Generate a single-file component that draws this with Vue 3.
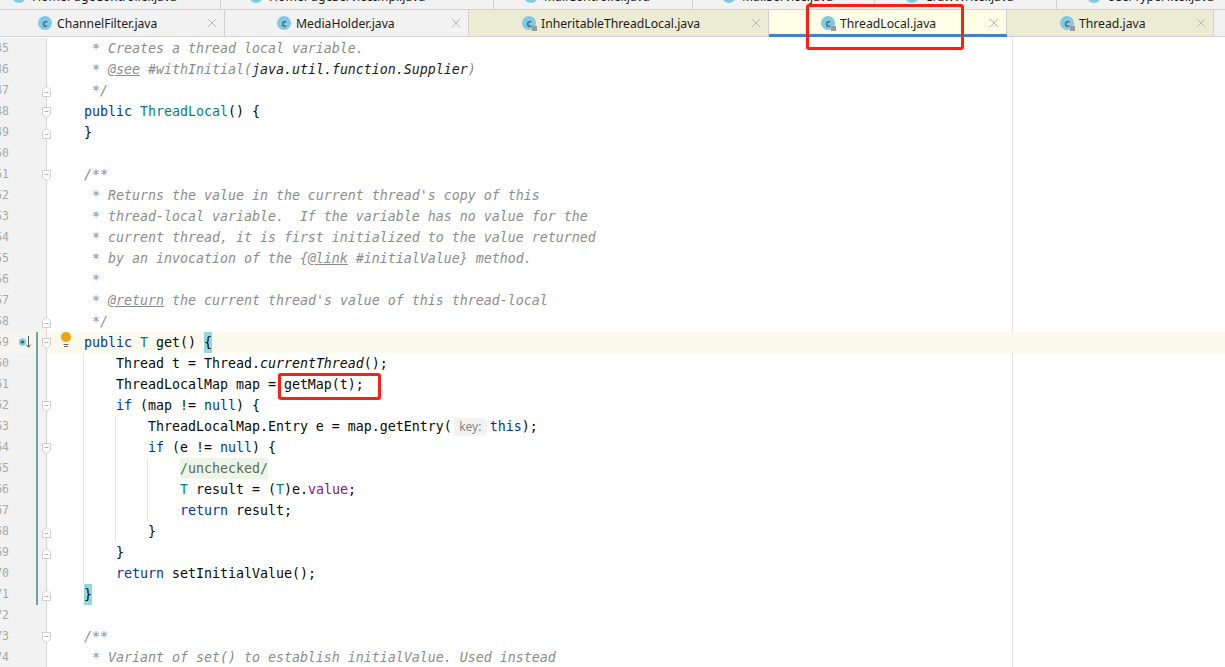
<script setup>
const topTabs = [
  { name: 'HomePageController.java', pad: 12 },
  { name: 'HomePageServiceImpl.java', pad: 28 },
  { name: 'MallController.java', pad: 30 },
  { name: 'MallService.java', pad: 29 },
  { name: 'CrawWriter.java', pad: 30 },
  { name: 'UserTypeFilter.java', pad: 30 }
]
const tabs = [
  { name: 'ChannelFilter.java', pad: 38, kind: '' },
  { name: 'MediaHolder.java', pad: 52, kind: '' },
  { name: 'InheritableThreadLocal.java', pad: 53, kind: 'ro' },
  { name: 'ThreadLocal.java', pad: 52, kind: 'ro active' },
  { name: 'Thread.java', pad: 53, kind: 'ro' }
]
const k = 'kw', c = 'cm', t = 'ty', d = 'dt', b = 'bk', i = 'it', m = 'mt', f = 'fd', u = 'un'
const rows = [
  [45, '', [[c, '     * Creates a thread local variable.']]],
  [46, '', [[c, '     * '], [d, '@see'], [c, ' #withInitial('], [b, 'java.util.function.Supplier'], [c, ')']]],
  [47, 'up', [[c, '     */']]],
  [48, 'down', [['', '    '], [k, 'public '], [t, 'ThreadLocal'], ['', '() {']]],
  [49, 'up', [['', '    }']]],
  [50, '', []],
  [51, 'down', [[c, '    /**']]],
  [52, '', [[c, "     * Returns the value in the current thread's copy of this"]]],
  [53, '', [[c, '     * thread-local variable.  If the variable has no value for the']]],
  [54, '', [[c, '     * current thread, it is first initialized to the value returned']]],
  [55, '', [[c, '     * by an invocation of the {'], [d, '@link'], [c, ' #initialValue} method.']]],
  [56, '', [[c, '     *']]],
  [57, '', [[c, '     * '], [d, '@return'], [c, " the current thread's value of this thread-local"]]],
  [58, 'up', [[c, '     */']]],
  [59, 'down', [['', '    '], [k, 'public '], [t, 'T '], ['', 'get() '], [m, '{']]],
  [60, '', [['', '        Thread t = Thread.'], [i, 'currentThread'], ['', '();']]],
  [61, '', [['', '        ThreadLocalMap map = getMap(t);']]],
  [62, 'down', [['', '        '], [k, 'if '], ['', '(map != '], [k, 'null'], ['', ') {']]],
  [63, '', [['', '            ThreadLocalMap.Entry e = map.getEntry('], ['hint', 'key:'], [k, 'this'], ['', ');']]],
  [64, 'down', [['', '            '], [k, 'if '], ['', '(e != '], [k, 'null'], ['', ') {']]],
  [65, '', [['', '                '], [u, '/unchecked/']]],
  [66, '', [['', '                '], [t, 'T '], ['', 'result = ('], [t, 'T'], ['', ')e.'], [f, 'value'], ['', ';']]],
  [67, '', [['', '                '], [k, 'return '], ['', 'result;']]],
  [68, 'up', [['', '            }']]],
  [69, 'up', [['', '        }']]],
  [70, '', [['', '        '], [k, 'return '], ['', 'setInitialValue();']]],
  [71, 'up', [['', '    '], [m, '}']]],
  [72, '', []],
  [73, 'down', [[c, '    /**']]],
  [74, '', [[c, '     * Variant of set() to establish initialValue. Used instead']]]
]
const guides = (n) => {
  const g = []
  if (n >= 60 && n <= 70) g.push(83)
  if (n >= 63 && n <= 68) g.push(115)
  if (n >= 65 && n <= 67) g.push(147)
  return g
}
</script>

<template>
  <div class="app">
    <div class="tabs top">
      <div v-for="tab in topTabs" :key="tab.name" class="tab" :style="{ paddingLeft: tab.pad + 'px' }">
        <span class="icon"></span>
        <span class="name">{{ tab.name }}</span>
      </div>
    </div>
    <div class="tabs main">
      <div v-for="tab in tabs" :key="tab.name" class="tab" :class="tab.kind" :style="{ paddingLeft: tab.pad + 'px' }">
        <span class="icon"><span class="letter">c</span><span class="lock"></span></span>
        <span class="name">{{ tab.name }}</span>
        <svg class="close" width="10" height="10" viewBox="0 0 10 10"><path d="M1 1 9 9M9 1 1 9" /></svg>
      </div>
      <div class="tab rest"></div>
    </div>
    <div class="editor">
      <div class="margin-line"></div>
      <div v-for="row in rows" :key="row[0]" class="row" :class="{ current: row[0] === 59 }">
        <div class="gutter">
          <span class="num">{{ row[0] }}</span>
          <svg v-if="row[0] === 59" class="impl" width="16" height="14" viewBox="0 0 16 14">
            <circle cx="5.5" cy="6" r="3.7" fill="#7ccbe0" />
            <circle cx="5.5" cy="6" r="1.6" fill="#3d5a68" />
            <path d="M11.5 0v11M9.3 8.7 11.5 11.2 13.7 8.7" fill="none" stroke="#555" stroke-width="1" />
          </svg>
          <span v-if="row[0] >= 59 && row[0] <= 71" class="changed"></span>
        </div>
        <svg v-if="row[1] === 'down'" class="fold" width="9" height="11" viewBox="0 0 9 11">
          <path d="M.5.5h8v7l-4 3-4-3z" fill="#fff" stroke="#cfcfcf" />
          <path d="M2.5 4.5h4" stroke="#b4b4b4" />
        </svg>
        <svg v-if="row[1] === 'up'" class="fold" width="9" height="11" viewBox="0 0 9 11">
          <path d="M.5 10.5h8v-7l-4-3-4 3z" fill="#fff" stroke="#cfcfcf" />
          <path d="M2.5 6.5h4" stroke="#b4b4b4" />
        </svg>
        <svg v-if="row[0] === 59" class="bulb" width="12" height="16" viewBox="0 0 12 16">
          <circle cx="6" cy="5" r="5" fill="#f0a30a" />
          <path d="M3.5 12.5h5M4 14.5h4" stroke="#666" stroke-width="1" />
        </svg>
        <span v-for="g in guides(row[0])" :key="g" class="guide" :style="{ left: g + 'px' }"></span>
        <code class="code"><span v-for="(tok, n) in row[2]" :key="n" :class="tok[0]">{{ tok[1] }}</span></code>
      </div>
      <div class="mark tab-mark"></div>
      <div class="mark call-mark"></div>
    </div>
  </div>
</template>

<style scoped>
.app {
  position: relative;
  width: 1225px;
  height: 667px;
  overflow: hidden;
  background: #fff;
  display: flex;
  flex-direction: column;
}
.tabs {
  display: grid;
  flex: none;
  background: #f2f2f2;
  border-bottom: 1px solid #d1d1d1;
  box-sizing: border-box;
  font-family: "Noto Sans", sans-serif;
  font-size: 12.2px;
  color: #1c1c1c;
}
.top {
  height: 10px;
  grid-template-columns: 221px 273px 199px 182px 182px 1fr;
  overflow: hidden;
}
.main {
  height: 27px;
  grid-template-columns: 225px 244px 300px 238px 207px 1fr;
}
.tab {
  position: relative;
  display: flex;
  align-items: center;
  gap: 5px;
  box-sizing: border-box;
  border-right: 1px solid #d1d1d1;
  min-width: 0;
}
.top .tab {
  align-items: flex-end;
  height: 9px;
  padding-bottom: 6px;
}
.top .name {
  margin-bottom: -2px;
  margin-left: 1px;
}
.tab:last-child {
  border-right: 0;
}
.ro {
  background: #ecebd3;
}
.active {
  background: #fefee6;
}
.active::after {
  content: "";
  position: absolute;
  left: 0;
  right: -1px;
  bottom: -1px;
  height: 3px;
  background: #4083c9;
}
.icon {
  position: relative;
  flex: none;
  width: 14px;
  height: 14px;
  border-radius: 50%;
  background: #7fcbe5;
  display: flex;
  align-items: center;
  justify-content: center;
}
.letter {
  font-size: 10px;
  line-height: 1;
  font-weight: 700;
  color: #4f6b78;
}
.lock {
  display: none;
}
.ro .lock {
  display: block;
  position: absolute;
  right: -1px;
  bottom: -1px;
  width: 5px;
  height: 5px;
  background: #9a9a9a;
}
.name {
  white-space: nowrap;
}
.close {
  position: absolute;
  right: 7px;
  top: 8px;
}
.close path {
  fill: none;
  stroke: #b9b9b9;
  stroke-width: 1;
}
.editor {
  position: relative;
  flex: 1;
  padding-top: 1px;
}
.margin-line {
  position: absolute;
  left: 1012px;
  top: 0;
  bottom: 0;
  width: 1px;
  background: #e3e3e3;
}
.row {
  position: relative;
  display: flex;
  height: 21px;
}
.current {
  background: #fcfaed;
}
.gutter {
  position: relative;
  flex: none;
  box-sizing: border-box;
  width: 47px;
  height: 21px;
  overflow: hidden;
  background: #f2f2f2;
  border-right: 1px solid #d6d6d6;
  display: flex;
  font-family: "DejaVu Sans Mono", monospace;
  font-size: 11.5px;
  line-height: 21px;
  color: #a9a9a9;
}
.current .gutter {
  background: #f7f6ee;
}
.num {
  flex: none;
  width: 9px;
  display: flex;
  justify-content: flex-end;
}
.impl {
  position: absolute;
  left: 17px;
  top: 4px;
}
.changed {
  position: absolute;
  left: 36px;
  top: 0;
  bottom: 0;
  width: 2px;
  background: #6aa5a5;
}
.fold {
  position: absolute;
  left: 42px;
  top: 6px;
}
.bulb {
  position: absolute;
  left: 60px;
  top: 0;
}
.guide {
  position: absolute;
  top: 0;
  bottom: 0;
  width: 1px;
  background: #e6e6e6;
}
.code {
  position: relative;
  padding-left: 5px;
  font-family: "DejaVu Sans Mono", monospace;
  font-size: 13.29px;
  line-height: 21px;
  white-space: pre;
  color: #080808;
  display: flex;
  align-items: stretch;
}
.kw {
  color: #0033b3;
}
.cm {
  color: #8c8c8c;
  font-style: italic;
}
.dt {
  color: #8c8c8c;
  font-style: italic;
  text-decoration: underline;
}
.bk {
  color: #1b1b1b;
  font-style: italic;
}
.it {
  font-style: italic;
}
.ty {
  color: #007e8a;
}
.mt {
  background: #93d9d9;
}
.fd {
  color: #871094;
}
.un {
  color: #5c6b5c;
  background: #edf5e6;
}
.hint {
  align-self: center;
  box-sizing: border-box;
  width: 33px;
  height: 18px;
  margin: 0 3px 0 2px;
  border-radius: 4px;
  background: #f2f2f2;
  color: #868686;
  font-family: "Noto Sans", sans-serif;
  font-size: 12px;
  line-height: 18px;
  text-align: center;
}
.mark {
  position: absolute;
  box-sizing: border-box;
  border: 3px solid #ff1f10;
  border-radius: 3px;
  z-index: 2;
}
.tab-mark {
  left: 806px;
  top: -33px;
  width: 158px;
  height: 46px;
}
.call-mark {
  left: 278px;
  top: 336px;
  width: 103px;
  height: 27px;
}
</style>

<style>
body {
  margin: 0;
}
</style>
